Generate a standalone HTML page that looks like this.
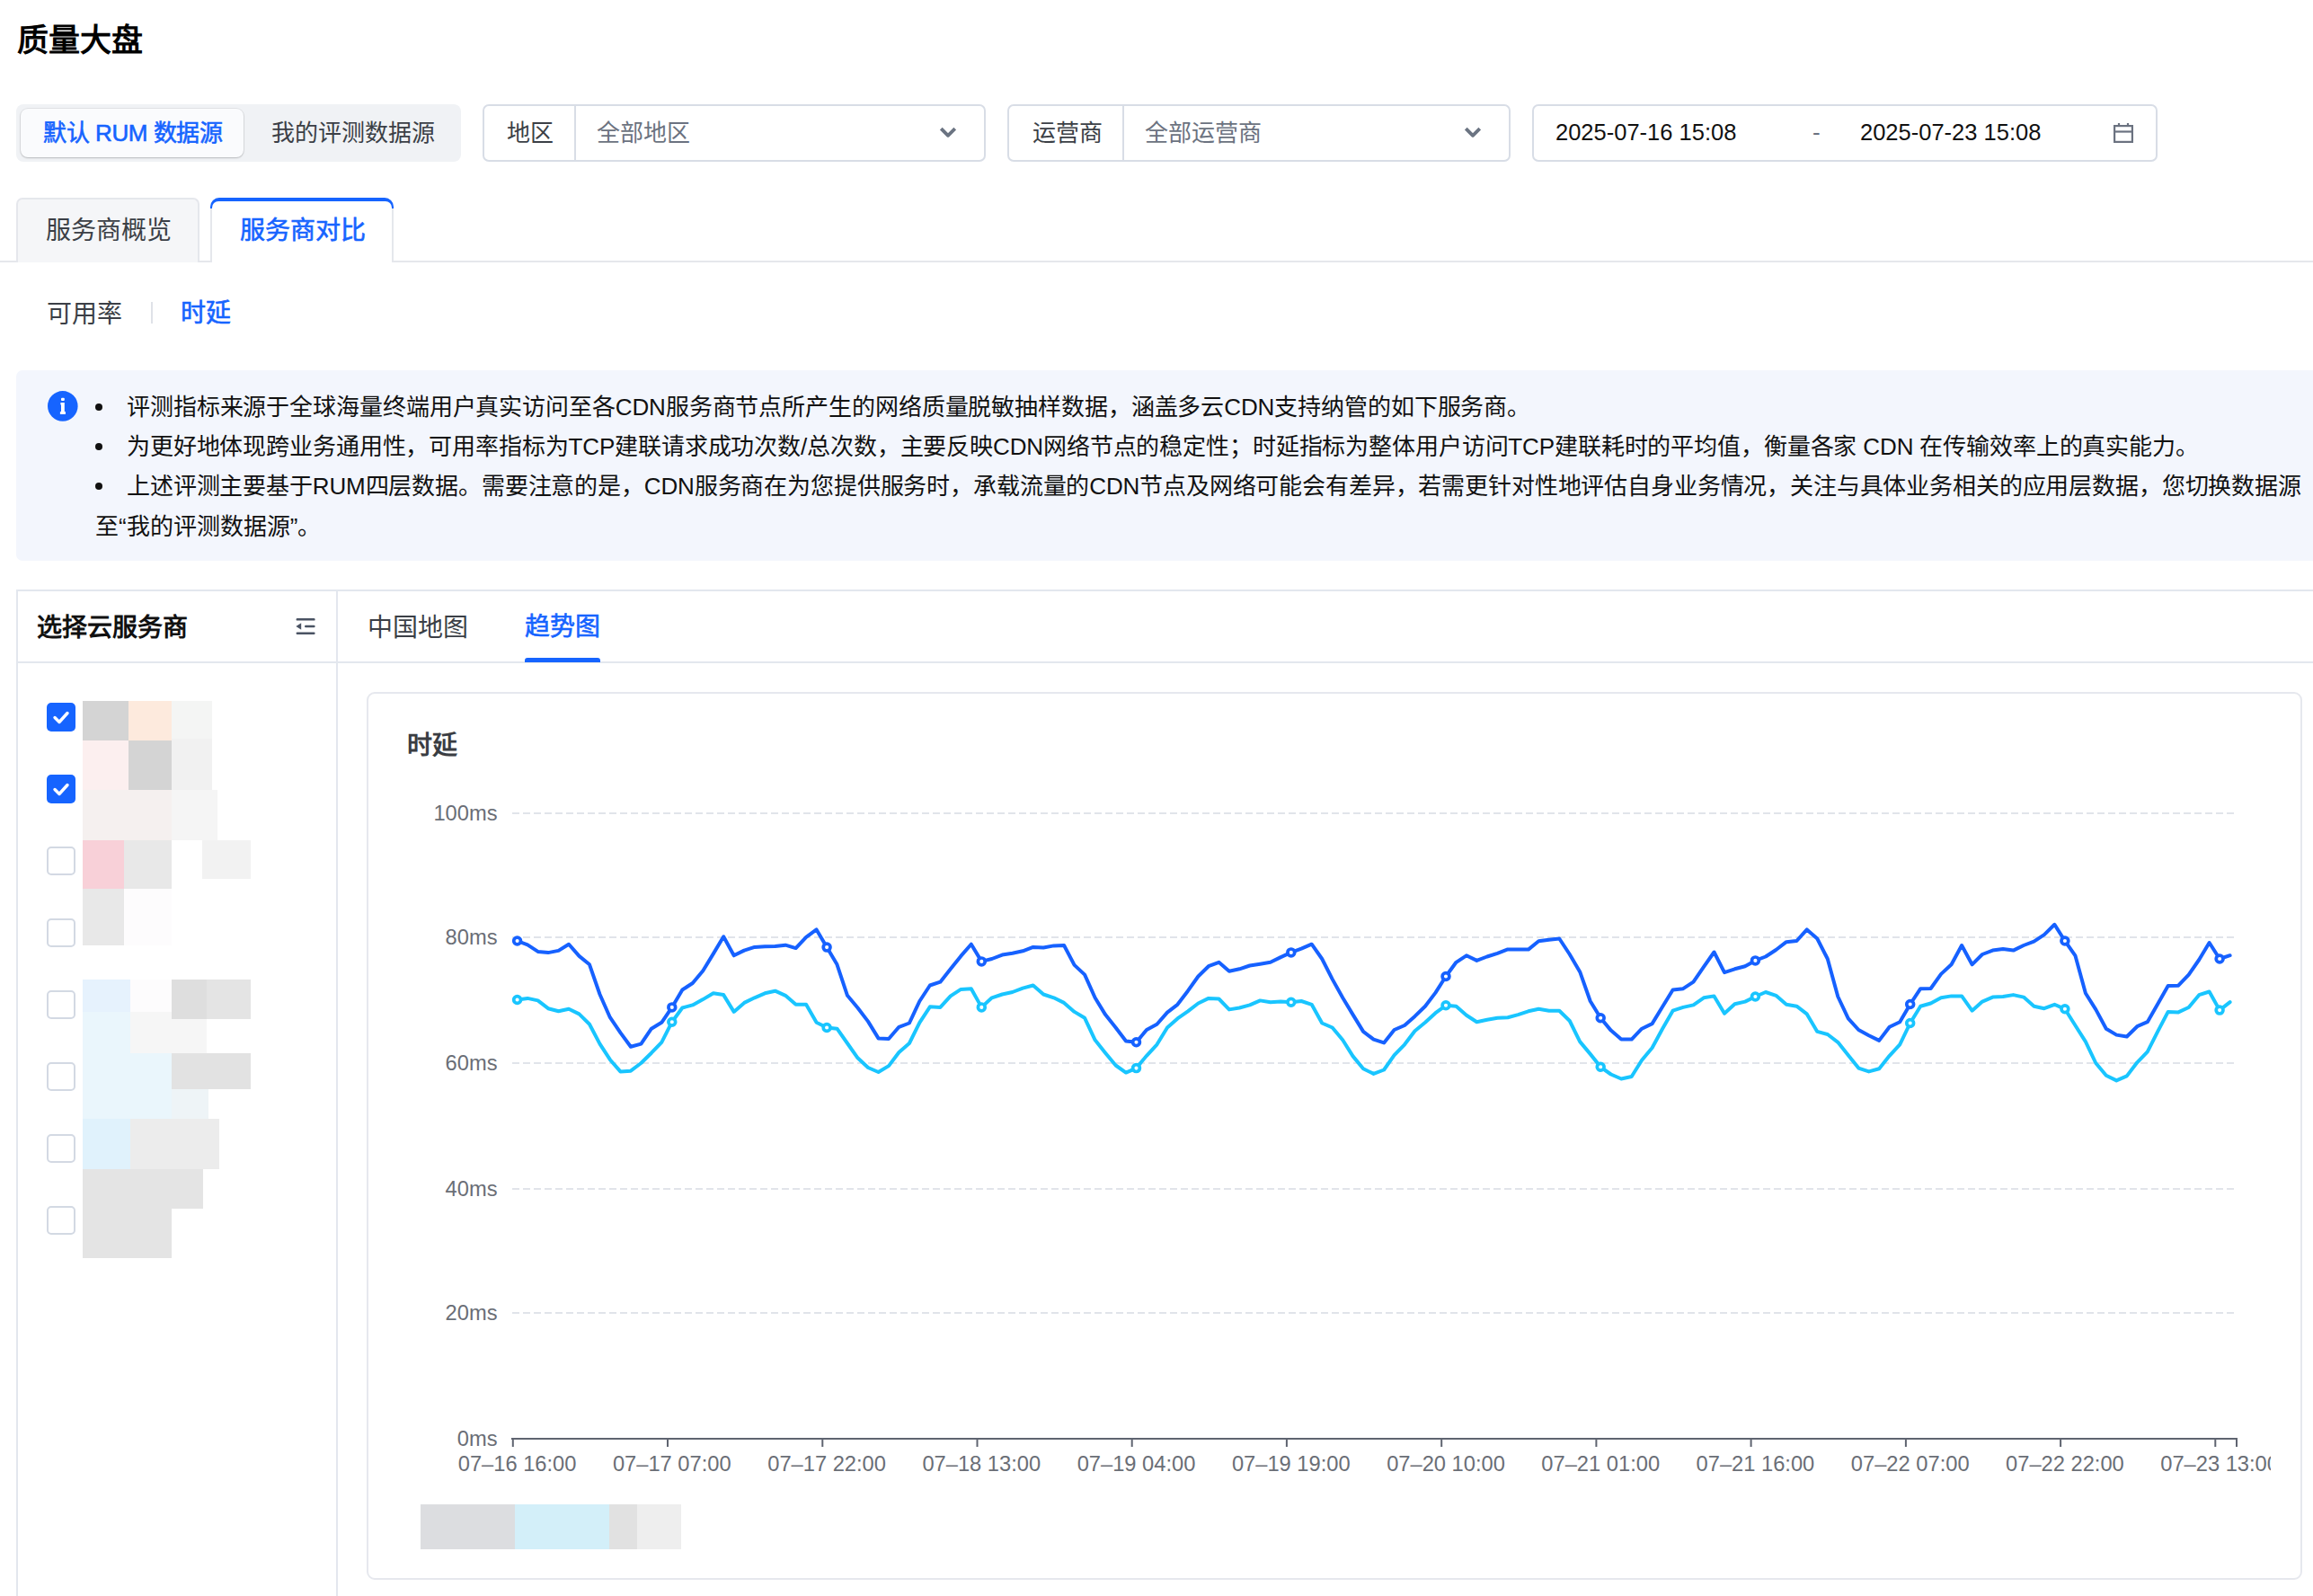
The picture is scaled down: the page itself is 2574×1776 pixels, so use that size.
<!DOCTYPE html>
<html lang="zh-CN"><head><meta charset="utf-8">
<style>
*{box-sizing:border-box;margin:0;padding:0}
html,body{width:2574px;height:1776px;overflow:hidden;background:#fff;font-family:"Liberation Sans",sans-serif;color:#1a1a1a}
.a{position:absolute;white-space:nowrap}
.t26{font-size:26px;line-height:30px}
.t28{font-size:28px;line-height:32px}
.blue{color:#1664ff}
.gray{color:#6b7280}
.dk{color:#3b3f46}
.box{position:absolute;border:2px solid #d8dde6;border-radius:7px;background:#fff}
.vl{position:absolute;width:2px;background:#d8dde6}
.cb{position:absolute;left:52px;width:32px;height:32px;border-radius:5px}
.cb.on{background:#1664ff}
.cb.off{border:2px solid #d3d9e3;background:#fff}
.mz{position:absolute}
.inf{color:#111}
.md{font-weight:400;-webkit-text-stroke:0.6px currentColor}
</style></head><body>
<!-- title -->
<div class="a" style="left:19px;top:24px;font-size:35px;line-height:42px;font-weight:bold;color:#000">质量大盘</div>

<!-- segmented -->
<div class="a" style="left:18px;top:116px;width:495px;height:64px;background:#f0f2f5;border-radius:8px"></div>
<div class="a" style="left:23px;top:121px;width:248px;height:54px;background:#fafbfd;border-radius:8px;box-shadow:0 1px 2px rgba(0,0,0,.18),0 0 0 1px rgba(0,0,0,.06)"></div>
<div class="a t26 blue md" style="left:48px;top:133px;letter-spacing:-0.4px">默认 RUM 数据源</div>
<div class="a t26 dk" style="left:302px;top:133px">我的评测数据源</div>

<!-- region select -->
<div class="box" style="left:537px;top:116px;width:560px;height:64px"></div>
<div class="vl" style="left:639px;top:117px;height:62px"></div>
<div class="a t26 dk" style="left:564px;top:133px">地区</div>
<div class="a t26 gray" style="left:664px;top:133px">全部地区</div>
<svg class="a" style="left:1044px;top:141px" width="22" height="16" viewBox="0 0 22 16"><path d="M4.6 3.4 L11 9.8 L17.4 3.4" fill="none" stroke="#6b7482" stroke-width="3.8" stroke-linecap="square" stroke-linejoin="round"/></svg>

<!-- isp select -->
<div class="box" style="left:1121px;top:116px;width:560px;height:64px"></div>
<div class="vl" style="left:1249px;top:117px;height:62px"></div>
<div class="a t26 dk" style="left:1149px;top:133px">运营商</div>
<div class="a t26 gray" style="left:1274px;top:133px">全部运营商</div>
<svg class="a" style="left:1628px;top:141px" width="22" height="16" viewBox="0 0 22 16"><path d="M4.6 3.4 L11 9.8 L17.4 3.4" fill="none" stroke="#6b7482" stroke-width="3.8" stroke-linecap="square" stroke-linejoin="round"/></svg>

<!-- date -->
<div class="box" style="left:1705px;top:116px;width:696px;height:64px"></div>
<div class="a t26" style="left:1731px;top:132px;color:#111;font-size:25.5px">2025-07-16 15:08</div>
<div class="a t26 gray" style="left:2017px;top:132px">-</div>
<div class="a t26" style="left:2070px;top:132px;color:#111;font-size:25.5px">2025-07-23 15:08</div>
<svg class="a" style="left:2350px;top:135px" width="26" height="26" viewBox="0 0 26 26"><rect x="3.1" y="5.1" width="19.8" height="17.8" fill="none" stroke="#6b7280" stroke-width="2.2"/><line x1="3" y1="11.5" x2="23" y2="11.5" stroke="#6b7280" stroke-width="2.2"/><line x1="8" y1="2" x2="8" y2="6" stroke="#6b7280" stroke-width="2.2"/><line x1="18" y1="2" x2="18" y2="6" stroke="#6b7280" stroke-width="2.2"/></svg>

<!-- top tabs -->
<div class="a" style="left:0;top:290px;width:2574px;height:2px;background:#e5e7ec"></div>
<div class="a" style="left:18px;top:220px;width:204px;height:72px;background:#f5f6f8;border:2px solid #e5e7ec;border-bottom:none;border-radius:7px 7px 0 0"></div>
<div class="a t28 dk" style="left:51px;top:241px">服务商概览</div>
<div class="a" style="left:234px;top:220px;width:204px;height:72px;background:#e5e7ec;border-radius:10px 10px 0 0"></div><div class="a" style="left:234px;top:220px;width:204px;height:12px;background:#1664ff;border-radius:10px 10px 0 0"></div><div class="a" style="left:236px;top:224px;width:200px;height:68px;background:#fff;border-radius:7px 7px 0 0"></div>
<div class="a t28 blue md" style="left:267px;top:241px">服务商对比</div>

<!-- sub tabs -->
<div class="a t28 dk" style="left:52px;top:334px">可用率</div>
<div class="a" style="left:168px;top:336px;width:2px;height:24px;background:#dfe2e8"></div>
<div class="a t28 blue md" style="left:201px;top:333px">时延</div>

<!-- info box -->
<div class="a" style="left:18px;top:412px;width:2600px;height:212px;background:#f3f6fd;border-radius:7px"></div>
<svg class="a" style="left:53px;top:435px" width="34" height="34" viewBox="0 0 34 34"><circle cx="16.8" cy="16.9" r="16.8" fill="#1664ff"/><rect x="15" y="7.7" width="3.8" height="3.4" rx="1" fill="#fff"/><path d="M14.4 13 H18.8 V23.1 H19.9 V25.9 H13.9 V23.1 H15 V15.6 H14.4 Z" fill="#fff"/></svg>
<div class="a" style="left:106px;top:449px;width:8px;height:8px;border-radius:50%;background:#111"></div>
<div class="a" style="left:106px;top:493px;width:8px;height:8px;border-radius:50%;background:#111"></div>
<div class="a" style="left:106px;top:537px;width:8px;height:8px;border-radius:50%;background:#111"></div>
<div class="a t26 inf" id="l1" style="letter-spacing:-0.106px;left:141px;top:438px">评测指标来源于全球海量终端用户真实访问至各CDN服务商节点所产生的网络质量脱敏抽样数据，涵盖多云CDN支持纳管的如下服务商。</div>
<div class="a t26 inf" id="l2" style="letter-spacing:-0.132px;left:141px;top:482px">为更好地体现跨业务通用性，可用率指标为TCP建联请求成功次数/总次数，主要反映CDN网络节点的稳定性；时延指标为整体用户访问TCP建联耗时的平均值，衡量各家 CDN 在传输效率上的真实能力。</div>
<div class="a t26 inf" id="l3" style="letter-spacing:-0.146px;left:141px;top:526px">上述评测主要基于RUM四层数据。需要注意的是，CDN服务商在为您提供服务时，承载流量的CDN节点及网络可能会有差异，若需更针对性地评估自身业务情况，关注与具体业务相关的应用层数据，您切换数据源</div>
<div class="a t26 inf" id="l4" style="left:106px;top:571px">至“我的评测数据源”。</div>

<!-- main panel -->
<div class="a" style="left:18px;top:656px;width:2600px;height:1200px;border:2px solid #e3e7ee;border-right:none"></div>
<div class="a" style="left:374px;top:657px;width:2px;height:1200px;background:#e3e7ee"></div>
<div class="a" style="left:19px;top:736px;width:2560px;height:2px;background:#e3e7ee"></div>
<div class="a t28" style="left:41px;top:683px;font-weight:600;color:#111">选择云服务商</div>
<svg class="a" style="left:327px;top:686px" width="26" height="22" viewBox="0 0 26 22"><rect x="2.6" y="2" width="21" height="2.6" rx="1.2" fill="#4a5363"/><rect x="12" y="9.7" width="11.6" height="2.6" rx="1.2" fill="#4a5363"/><rect x="2.6" y="17.4" width="21" height="2.6" rx="1.2" fill="#4a5363"/><path d="M2.4 11 L8.2 7.2 V14.8Z" fill="#4a5363"/></svg>

<div class="a t28 dk" style="left:409px;top:683px">中国地图</div>
<div class="a t28 blue md" style="left:584px;top:682px">趋势图</div>
<div class="a" style="left:584px;top:732px;width:84px;height:5px;background:#1664ff;border-radius:3px 3px 0 0"></div>

<div class="cb on" style="top:782px"><svg width="32" height="32" viewBox="0 0 32 32"><path d="M9 16.5 L14 21.5 L23 11.5" fill="none" stroke="#fff" stroke-width="3.4" stroke-linecap="round" stroke-linejoin="round"/></svg></div>
<div class="cb on" style="top:862px"><svg width="32" height="32" viewBox="0 0 32 32"><path d="M9 16.5 L14 21.5 L23 11.5" fill="none" stroke="#fff" stroke-width="3.4" stroke-linecap="round" stroke-linejoin="round"/></svg></div>
<div class="cb off" style="top:942px"></div>
<div class="cb off" style="top:1022px"></div>
<div class="cb off" style="top:1102px"></div>
<div class="cb off" style="top:1182px"></div>
<div class="cb off" style="top:1262px"></div>
<div class="cb off" style="top:1342px"></div>
<div class="mz" style="left:92px;top:780px;width:51px;height:44px;background:#d4d4d4"></div>
<div class="mz" style="left:143px;top:780px;width:48px;height:44px;background:#fdeadd"></div>
<div class="mz" style="left:191px;top:780px;width:45px;height:42px;background:#f4f5f4"></div>
<div class="mz" style="left:92px;top:824px;width:51px;height:55px;background:#fcefef"></div>
<div class="mz" style="left:143px;top:824px;width:48px;height:55px;background:#d4d4d4"></div>
<div class="mz" style="left:191px;top:822px;width:45px;height:57px;background:#f1f1f1"></div>
<div class="mz" style="left:92px;top:879px;width:99px;height:56px;background:#f5f0ef"></div>
<div class="mz" style="left:191px;top:879px;width:51px;height:56px;background:#f5f5f5"></div>
<div class="mz" style="left:92px;top:935px;width:46px;height:54px;background:#f8d0d8"></div>
<div class="mz" style="left:138px;top:935px;width:53px;height:54px;background:#e8e8e8"></div>
<div class="mz" style="left:225px;top:935px;width:54px;height:43px;background:#f2f2f2"></div>
<div class="mz" style="left:92px;top:989px;width:46px;height:63px;background:#e8e8e8"></div>
<div class="mz" style="left:138px;top:989px;width:53px;height:63px;background:#fdfcfd"></div>
<div class="mz" style="left:92px;top:1090px;width:53px;height:36px;background:#e6f2fd"></div>
<div class="mz" style="left:145px;top:1090px;width:46px;height:36px;background:#fdfcfd"></div>
<div class="mz" style="left:191px;top:1090px;width:39px;height:44px;background:#dedede"></div>
<div class="mz" style="left:230px;top:1090px;width:49px;height:44px;background:#e4e4e4"></div>
<div class="mz" style="left:92px;top:1126px;width:53px;height:46px;background:#eaf6fc"></div>
<div class="mz" style="left:145px;top:1126px;width:46px;height:46px;background:#f6f6f6"></div>
<div class="mz" style="left:191px;top:1134px;width:39px;height:38px;background:#f6f6f6"></div>
<div class="mz" style="left:92px;top:1172px;width:99px;height:40px;background:#eaf6fc"></div>
<div class="mz" style="left:191px;top:1172px;width:88px;height:40px;background:#e2e2e2"></div>
<div class="mz" style="left:92px;top:1212px;width:99px;height:33px;background:#eaf6fc"></div>
<div class="mz" style="left:191px;top:1212px;width:41px;height:33px;background:#eef4f7"></div>
<div class="mz" style="left:92px;top:1245px;width:53px;height:56px;background:#e0f2fc"></div>
<div class="mz" style="left:145px;top:1245px;width:99px;height:56px;background:#ececec"></div>
<div class="mz" style="left:92px;top:1301px;width:134px;height:44px;background:#e4e4e4"></div>
<div class="mz" style="left:92px;top:1345px;width:99px;height:55px;background:#e4e4e4"></div>
<!--CHART-->
<div class="a" style="left:408px;top:770px;width:2154px;height:988px;border:2px solid #e6e8ee;border-radius:9px;background:#fff"></div>
<div class="a t28" style="left:453px;top:814px;font-weight:bold;color:#3a3d42">时延</div>
<svg class="a" style="left:0;top:0" width="2574" height="1776" viewBox="0 0 2574 1776">
<line x1="570" y1="905" x2="2487" y2="905" stroke="#e1e4ea" stroke-width="2" stroke-dasharray="8 4"/>
<line x1="570" y1="1043" x2="2487" y2="1043" stroke="#e1e4ea" stroke-width="2" stroke-dasharray="8 4"/>
<line x1="570" y1="1183" x2="2487" y2="1183" stroke="#e1e4ea" stroke-width="2" stroke-dasharray="8 4"/>
<line x1="570" y1="1323" x2="2487" y2="1323" stroke="#e1e4ea" stroke-width="2" stroke-dasharray="8 4"/>
<line x1="570" y1="1461" x2="2487" y2="1461" stroke="#e1e4ea" stroke-width="2" stroke-dasharray="8 4"/>
<text x="553.5" y="913" text-anchor="end" font-family="Liberation Sans" font-size="23.7" fill="#6a6e76">100ms</text>
<text x="553.5" y="1051" text-anchor="end" font-family="Liberation Sans" font-size="23.7" fill="#6a6e76">80ms</text>
<text x="553.5" y="1191" text-anchor="end" font-family="Liberation Sans" font-size="23.7" fill="#6a6e76">60ms</text>
<text x="553.5" y="1331" text-anchor="end" font-family="Liberation Sans" font-size="23.7" fill="#6a6e76">40ms</text>
<text x="553.5" y="1469" text-anchor="end" font-family="Liberation Sans" font-size="23.7" fill="#6a6e76">20ms</text>
<text x="553.5" y="1609" text-anchor="end" font-family="Liberation Sans" font-size="23.7" fill="#6a6e76">0ms</text>
<line x1="569" y1="1601" x2="2490" y2="1601" stroke="#5f6470" stroke-width="2"/>
<line x1="570.8" y1="1600" x2="570.8" y2="1610" stroke="#5f6470" stroke-width="2"/>
<line x1="743.0" y1="1600" x2="743.0" y2="1610" stroke="#5f6470" stroke-width="2"/>
<line x1="915.3" y1="1600" x2="915.3" y2="1610" stroke="#5f6470" stroke-width="2"/>
<line x1="1087.5" y1="1600" x2="1087.5" y2="1610" stroke="#5f6470" stroke-width="2"/>
<line x1="1259.7" y1="1600" x2="1259.7" y2="1610" stroke="#5f6470" stroke-width="2"/>
<line x1="1431.9" y1="1600" x2="1431.9" y2="1610" stroke="#5f6470" stroke-width="2"/>
<line x1="1604.2" y1="1600" x2="1604.2" y2="1610" stroke="#5f6470" stroke-width="2"/>
<line x1="1776.4" y1="1600" x2="1776.4" y2="1610" stroke="#5f6470" stroke-width="2"/>
<line x1="1948.6" y1="1600" x2="1948.6" y2="1610" stroke="#5f6470" stroke-width="2"/>
<line x1="2120.9" y1="1600" x2="2120.9" y2="1610" stroke="#5f6470" stroke-width="2"/>
<line x1="2293.1" y1="1600" x2="2293.1" y2="1610" stroke="#5f6470" stroke-width="2"/>
<line x1="2465.3" y1="1600" x2="2465.3" y2="1610" stroke="#5f6470" stroke-width="2"/>
<line x1="2489.0" y1="1600" x2="2489.0" y2="1610" stroke="#5f6470" stroke-width="2"/>
<defs><clipPath id="cp"><rect x="400" y="1605" width="2127" height="60"/></clipPath></defs><g clip-path="url(#cp)">
<text x="575.6" y="1637.3" text-anchor="middle" font-family="Liberation Sans" font-size="23.7" fill="#6a6e76">07–16 16:00</text>
<text x="747.8" y="1637.3" text-anchor="middle" font-family="Liberation Sans" font-size="23.7" fill="#6a6e76">07–17 07:00</text>
<text x="920.1" y="1637.3" text-anchor="middle" font-family="Liberation Sans" font-size="23.7" fill="#6a6e76">07–17 22:00</text>
<text x="1092.3" y="1637.3" text-anchor="middle" font-family="Liberation Sans" font-size="23.7" fill="#6a6e76">07–18 13:00</text>
<text x="1264.5" y="1637.3" text-anchor="middle" font-family="Liberation Sans" font-size="23.7" fill="#6a6e76">07–19 04:00</text>
<text x="1436.8" y="1637.3" text-anchor="middle" font-family="Liberation Sans" font-size="23.7" fill="#6a6e76">07–19 19:00</text>
<text x="1609.0" y="1637.3" text-anchor="middle" font-family="Liberation Sans" font-size="23.7" fill="#6a6e76">07–20 10:00</text>
<text x="1781.2" y="1637.3" text-anchor="middle" font-family="Liberation Sans" font-size="23.7" fill="#6a6e76">07–21 01:00</text>
<text x="1953.4" y="1637.3" text-anchor="middle" font-family="Liberation Sans" font-size="23.7" fill="#6a6e76">07–21 16:00</text>
<text x="2125.7" y="1637.3" text-anchor="middle" font-family="Liberation Sans" font-size="23.7" fill="#6a6e76">07–22 07:00</text>
<text x="2297.9" y="1637.3" text-anchor="middle" font-family="Liberation Sans" font-size="23.7" fill="#6a6e76">07–22 22:00</text>
<text x="2470.1" y="1637.3" text-anchor="middle" font-family="Liberation Sans" font-size="23.7" fill="#6a6e76">07–23 13:00</text>
</g>
<path d="M575.6 1112.5 L587.1 1110.9 L598.6 1113.4 L610.0 1122.2 L621.5 1125.3 L633.0 1122.8 L644.5 1128.4 L656.0 1139.7 L667.5 1161.6 L678.9 1179.2 L690.4 1192.4 L701.9 1191.7 L713.4 1183.0 L724.9 1171.7 L736.3 1159.8 L747.8 1137.2 L759.3 1121.5 L770.8 1118.4 L782.3 1112.1 L793.8 1105.3 L805.2 1107.1 L816.7 1125.9 L828.2 1115.9 L839.7 1110.3 L851.2 1105.3 L862.6 1102.7 L874.1 1107.8 L885.6 1117.8 L897.1 1117.8 L908.6 1137.8 L920.1 1143.5 L931.5 1144.7 L943.0 1161.0 L954.5 1177.3 L966.0 1188.0 L977.5 1193.0 L989.0 1186.1 L1000.4 1171.0 L1011.9 1161.0 L1023.4 1137.8 L1034.9 1120.3 L1046.4 1120.9 L1057.8 1108.4 L1069.3 1100.9 L1080.8 1100.2 L1092.3 1120.9 L1103.8 1110.3 L1115.3 1106.5 L1126.7 1104.0 L1138.2 1099.6 L1149.7 1096.5 L1161.2 1106.5 L1172.7 1110.3 L1184.1 1115.9 L1195.6 1125.9 L1207.1 1132.8 L1218.6 1157.3 L1230.1 1171.7 L1241.6 1185.5 L1253.0 1193.6 L1264.5 1188.6 L1276.0 1174.8 L1287.5 1162.3 L1299.0 1143.5 L1310.4 1133.4 L1321.9 1125.3 L1333.4 1116.5 L1344.9 1110.9 L1356.4 1111.5 L1367.9 1123.4 L1379.3 1121.5 L1390.8 1118.4 L1402.3 1113.4 L1413.8 1115.3 L1425.3 1114.6 L1436.8 1115.3 L1448.2 1114.0 L1459.7 1117.8 L1471.2 1138.5 L1482.7 1143.5 L1494.2 1157.3 L1505.6 1175.4 L1517.1 1189.2 L1528.6 1194.9 L1540.1 1190.5 L1551.6 1174.2 L1563.1 1162.3 L1574.5 1147.2 L1586.0 1137.8 L1597.5 1127.2 L1609.0 1118.8 L1620.5 1119.7 L1631.9 1129.7 L1643.4 1137.2 L1654.9 1134.7 L1666.4 1132.8 L1677.9 1132.2 L1689.4 1129.1 L1700.8 1125.3 L1712.3 1122.8 L1723.8 1124.7 L1735.3 1124.7 L1746.8 1136.0 L1758.2 1159.1 L1769.7 1172.9 L1781.2 1187.3 L1792.7 1195.5 L1804.2 1200.5 L1815.7 1198.0 L1827.1 1179.8 L1838.6 1166.0 L1850.1 1144.7 L1861.6 1124.7 L1873.1 1120.9 L1884.5 1118.4 L1896.0 1110.3 L1907.5 1108.4 L1919.0 1127.8 L1930.5 1117.2 L1942.0 1114.6 L1953.4 1109.0 L1964.9 1104.0 L1976.4 1107.8 L1987.9 1117.8 L1999.4 1119.7 L2010.8 1128.4 L2022.3 1147.9 L2033.8 1151.0 L2045.3 1159.8 L2056.8 1174.2 L2068.3 1188.6 L2079.7 1192.4 L2091.2 1189.2 L2102.7 1174.8 L2114.2 1162.3 L2125.7 1138.5 L2137.2 1119.7 L2148.6 1116.5 L2160.1 1110.3 L2171.6 1108.4 L2183.1 1108.4 L2194.6 1124.7 L2206.0 1114.6 L2217.5 1109.6 L2229.0 1109.0 L2240.5 1107.1 L2252.0 1109.6 L2263.5 1119.7 L2274.9 1122.2 L2286.4 1117.8 L2297.9 1122.8 L2309.4 1141.0 L2320.9 1159.1 L2332.3 1183.0 L2343.8 1196.7 L2355.3 1202.4 L2366.8 1197.4 L2378.3 1182.3 L2389.8 1170.4 L2401.2 1147.9 L2412.7 1125.9 L2424.2 1126.4 L2435.7 1121.0 L2447.2 1107.2 L2458.6 1103.5 L2470.1 1124.1 L2481.6 1115.1" fill="none" stroke="#19c5ff" stroke-width="4" stroke-linejoin="round" stroke-linecap="round"/>
<path d="M575.6 1047.0 L587.1 1051.4 L598.6 1058.9 L610.0 1060.1 L621.5 1057.9 L633.0 1050.7 L644.5 1063.9 L656.0 1073.3 L667.5 1106.5 L678.9 1132.2 L690.4 1149.1 L701.9 1164.8 L713.4 1161.6 L724.9 1144.7 L736.3 1137.8 L747.8 1120.9 L759.3 1101.5 L770.8 1094.0 L782.3 1080.2 L793.8 1061.4 L805.2 1042.3 L816.7 1063.3 L828.2 1057.6 L839.7 1053.9 L851.2 1053.2 L862.6 1052.9 L874.1 1051.7 L885.6 1055.1 L897.1 1042.8 L908.6 1034.4 L920.1 1054.1 L931.5 1073.3 L943.0 1107.8 L954.5 1121.5 L966.0 1136.6 L977.5 1155.4 L989.0 1156.0 L1000.4 1142.8 L1011.9 1138.5 L1023.4 1114.0 L1034.9 1096.5 L1046.4 1092.7 L1057.8 1078.3 L1069.3 1063.9 L1080.8 1050.7 L1092.3 1069.9 L1103.8 1067.0 L1115.3 1062.6 L1126.7 1060.8 L1138.2 1058.3 L1149.7 1053.9 L1161.2 1054.5 L1172.7 1052.4 L1184.1 1052.0 L1195.6 1073.9 L1207.1 1084.6 L1218.6 1110.3 L1230.1 1129.1 L1241.6 1143.5 L1253.0 1158.5 L1264.5 1159.8 L1276.0 1146.0 L1287.5 1139.7 L1299.0 1126.6 L1310.4 1117.8 L1321.9 1102.7 L1333.4 1086.5 L1344.9 1075.2 L1356.4 1070.8 L1367.9 1080.8 L1379.3 1078.3 L1390.8 1074.5 L1402.3 1072.7 L1413.8 1070.8 L1425.3 1065.1 L1436.8 1059.9 L1448.2 1055.7 L1459.7 1050.7 L1471.2 1067.0 L1482.7 1089.6 L1494.2 1110.3 L1505.6 1129.1 L1517.1 1147.9 L1528.6 1156.6 L1540.1 1160.4 L1551.6 1146.0 L1563.1 1141.0 L1574.5 1130.9 L1586.0 1119.7 L1597.5 1104.6 L1609.0 1086.5 L1620.5 1070.8 L1631.9 1063.3 L1643.4 1068.9 L1654.9 1064.5 L1666.4 1060.8 L1677.9 1056.4 L1689.4 1056.6 L1700.8 1056.6 L1712.3 1047.3 L1723.8 1045.7 L1735.3 1044.5 L1746.8 1062.0 L1758.2 1081.4 L1769.7 1114.0 L1781.2 1132.8 L1792.7 1146.6 L1804.2 1156.6 L1815.7 1156.6 L1827.1 1144.7 L1838.6 1139.1 L1850.1 1120.3 L1861.6 1101.5 L1873.1 1100.2 L1884.5 1092.7 L1896.0 1075.8 L1907.5 1059.5 L1919.0 1082.1 L1930.5 1078.3 L1942.0 1075.2 L1953.4 1068.9 L1964.9 1064.5 L1976.4 1057.0 L1987.9 1048.2 L1999.4 1047.0 L2010.8 1034.4 L2022.3 1044.5 L2033.8 1067.0 L2045.3 1109.0 L2056.8 1133.4 L2068.3 1146.0 L2079.7 1152.2 L2091.2 1157.9 L2102.7 1142.8 L2114.2 1137.2 L2125.7 1117.5 L2137.2 1100.2 L2148.6 1100.0 L2160.1 1083.9 L2171.6 1073.3 L2183.1 1052.0 L2194.6 1073.3 L2206.0 1062.0 L2217.5 1057.6 L2229.0 1056.1 L2240.5 1057.6 L2252.0 1052.0 L2263.5 1047.6 L2274.9 1040.1 L2286.4 1028.8 L2297.9 1047.0 L2309.4 1063.3 L2320.9 1105.3 L2332.3 1123.4 L2343.8 1144.7 L2355.3 1151.6 L2366.8 1153.5 L2378.3 1142.2 L2389.8 1137.2 L2401.2 1117.2 L2412.7 1097.1 L2424.2 1096.7 L2435.7 1084.7 L2447.2 1068.0 L2458.6 1049.0 L2470.1 1067.0 L2481.6 1063.2" fill="none" stroke="#1661ff" stroke-width="4" stroke-linejoin="round" stroke-linecap="round"/>
<circle cx="575.6" cy="1112.5" r="3.9" fill="#fff" stroke="#19c5ff" stroke-width="3.7"/>
<circle cx="747.8" cy="1137.2" r="3.9" fill="#fff" stroke="#19c5ff" stroke-width="3.7"/>
<circle cx="920.1" cy="1143.5" r="3.9" fill="#fff" stroke="#19c5ff" stroke-width="3.7"/>
<circle cx="1092.3" cy="1120.9" r="3.9" fill="#fff" stroke="#19c5ff" stroke-width="3.7"/>
<circle cx="1264.5" cy="1188.6" r="3.9" fill="#fff" stroke="#19c5ff" stroke-width="3.7"/>
<circle cx="1436.8" cy="1115.3" r="3.9" fill="#fff" stroke="#19c5ff" stroke-width="3.7"/>
<circle cx="1609.0" cy="1118.8" r="3.9" fill="#fff" stroke="#19c5ff" stroke-width="3.7"/>
<circle cx="1781.2" cy="1187.3" r="3.9" fill="#fff" stroke="#19c5ff" stroke-width="3.7"/>
<circle cx="1953.4" cy="1109.0" r="3.9" fill="#fff" stroke="#19c5ff" stroke-width="3.7"/>
<circle cx="2125.7" cy="1138.5" r="3.9" fill="#fff" stroke="#19c5ff" stroke-width="3.7"/>
<circle cx="2297.9" cy="1122.8" r="3.9" fill="#fff" stroke="#19c5ff" stroke-width="3.7"/>
<circle cx="2470.1" cy="1124.1" r="3.9" fill="#fff" stroke="#19c5ff" stroke-width="3.7"/>
<circle cx="575.6" cy="1047.0" r="3.9" fill="#fff" stroke="#1661ff" stroke-width="3.7"/>
<circle cx="747.8" cy="1120.9" r="3.9" fill="#fff" stroke="#1661ff" stroke-width="3.7"/>
<circle cx="920.1" cy="1054.1" r="3.9" fill="#fff" stroke="#1661ff" stroke-width="3.7"/>
<circle cx="1092.3" cy="1069.9" r="3.9" fill="#fff" stroke="#1661ff" stroke-width="3.7"/>
<circle cx="1264.5" cy="1159.8" r="3.9" fill="#fff" stroke="#1661ff" stroke-width="3.7"/>
<circle cx="1436.8" cy="1059.9" r="3.9" fill="#fff" stroke="#1661ff" stroke-width="3.7"/>
<circle cx="1609.0" cy="1086.5" r="3.9" fill="#fff" stroke="#1661ff" stroke-width="3.7"/>
<circle cx="1781.2" cy="1132.8" r="3.9" fill="#fff" stroke="#1661ff" stroke-width="3.7"/>
<circle cx="1953.4" cy="1068.9" r="3.9" fill="#fff" stroke="#1661ff" stroke-width="3.7"/>
<circle cx="2125.7" cy="1117.5" r="3.9" fill="#fff" stroke="#1661ff" stroke-width="3.7"/>
<circle cx="2297.9" cy="1047.0" r="3.9" fill="#fff" stroke="#1661ff" stroke-width="3.7"/>
<circle cx="2470.1" cy="1067.0" r="3.9" fill="#fff" stroke="#1661ff" stroke-width="3.7"/>
</svg>
<div class="mz" style="left:468px;top:1674px;width:105px;height:50px;background:#dcdde0"></div>
<div class="mz" style="left:573px;top:1674px;width:105px;height:50px;background:#d3eff9"></div>
<div class="mz" style="left:678px;top:1674px;width:31px;height:50px;background:#e1e1e1"></div>
<div class="mz" style="left:709px;top:1674px;width:49px;height:50px;background:#eeeeee"></div>
<!--/CHART-->
</body></html>
